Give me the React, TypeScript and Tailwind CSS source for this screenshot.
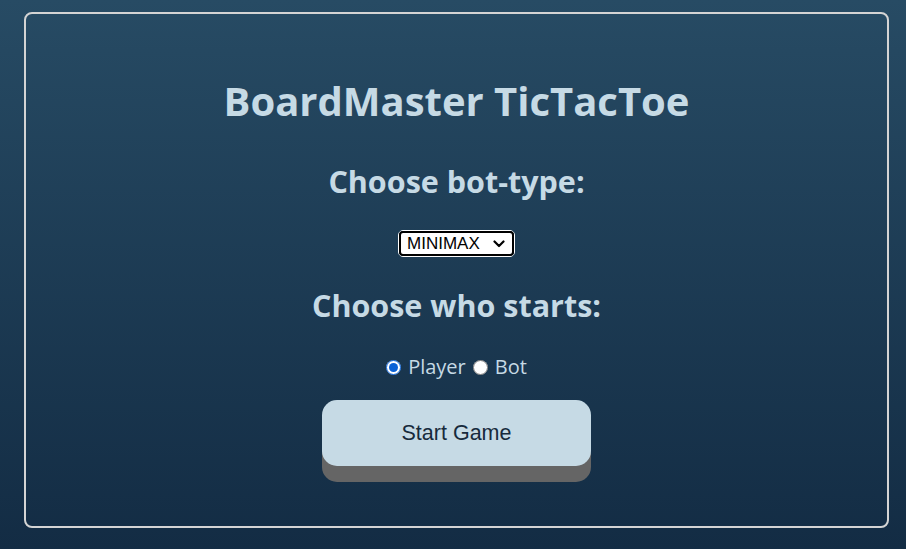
export default function App() {
  return (
    <div className="h-[549px] w-full bg-gradient-to-b from-[#274b64] to-[#132c44] px-6 pt-3 font-['Open_Sans',sans-serif]">
      <div className="flex h-[516px] w-[865px] flex-col items-center rounded-lg border-2 border-[#d4d4d4] pt-[59px] text-[#c6dae5]">
        <h1 className="text-[40px] font-bold leading-[56px]">BoardMaster TicTacToe</h1>
        <h2 className="mt-[32px] text-[30.5px] font-bold leading-[40px]">Choose bot-type:</h2>
        <div className="relative mt-[29px] h-[27px] w-[117px] rounded-[5px] border border-white">
          <select className="h-full w-full appearance-none rounded-[4px] border-2 border-black bg-white pl-[6px] font-['Liberation_Sans',sans-serif] text-[17px] leading-[21px] text-black">
            <option>MINIMAX</option>
            <option>RANDOM</option>
          </select>
          <svg className="pointer-events-none absolute right-[9px] top-[9px]" width="12" height="8" viewBox="0 0 12 8">
            <path d="M1.5 1.5 L6 6 L10.5 1.5" fill="none" stroke="black" strokeWidth="2.2" strokeLinecap="round" strokeLinejoin="round" />
          </svg>
        </div>
        <h2 className="mt-[28px] text-[30.5px] font-bold leading-[40px]">Choose who starts:</h2>
        <div className="mt-[29px] flex items-center gap-[7px] text-[20px] leading-[26px]">
          <label className="flex items-center gap-[7px]">
            <input type="radio" name="start" defaultChecked className="m-0 h-[15px] w-[15px] accent-[#0b62d6]" />
            Player
          </label>
          <label className="flex items-center gap-[7px]">
            <input type="radio" name="start" className="m-0 h-[15px] w-[15px]" />
            Bot
          </label>
        </div>
        <button className="mt-[20px] h-[66px] w-[269px] rounded-[15px] bg-[#c6dae5] font-['Liberation_Sans',sans-serif] text-[21.5px] text-[#172a3c] shadow-[0_16px_0_#656565]">
          Start Game
        </button>
      </div>
    </div>
  );
}
